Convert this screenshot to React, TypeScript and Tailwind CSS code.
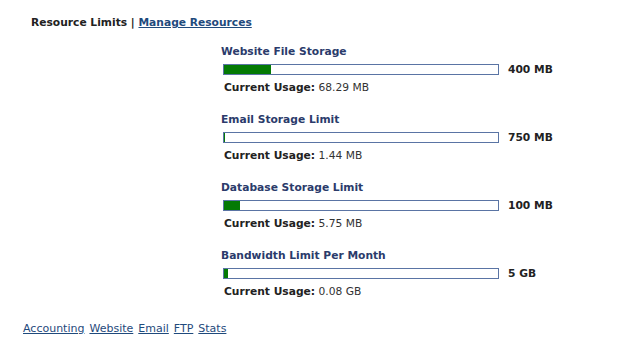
import React from "react";

const items = [
  { title: "Website File Storage", limit: "400 MB", used: 68.29, max: 400, usage: "68.29 MB" },
  { title: "Email Storage Limit", limit: "750 MB", used: 1.44, max: 750, usage: "1.44 MB" },
  { title: "Database Storage Limit", limit: "100 MB", used: 5.75, max: 100, usage: "5.75 MB" },
  { title: "Bandwidth Limit Per Month", limit: "5 GB", used: 0.08, max: 5, usage: "0.08 GB" },
];

export default function App() {
  return (
    <div className="w-[638px] h-[340px] bg-white font-['DejaVu_Sans',sans-serif] text-[10.7px] leading-[13px] text-[#222]">
      <div className="pl-[31px] pt-[16px] font-bold text-[#222]">
        Resource Limits | <a href="#" className="text-[#1f4a7c] underline">Manage Resources</a>
      </div>
      <div className="pl-[221px] pt-[16px] flex flex-col gap-[19px]">
        {items.map((it) => {
          const pct = Math.max((it.used / it.max) * 100, 0.4);
          return (
            <div key={it.title} className="flex flex-col">
              <div className="font-bold text-[#2b3b6b]">{it.title}</div>
              <div className="flex items-center mt-[5px] pl-[2px]">
                <div className="w-[276px] h-[11px] border border-[#5a74a4] bg-white">
                  <div className="h-full bg-[#047a04]" style={{ width: `${pct}%` }} />
                </div>
                <span className="ml-[9px] font-bold text-[#222]">{it.limit}</span>
              </div>
              <div className="mt-[5px] pl-[3px] text-[#333]">
                <span className="font-bold text-[#222]">Current Usage:</span> {it.usage}
              </div>
            </div>
          );
        })}
      </div>
      <div className="pl-[23px] pt-[24px] flex gap-[5px] text-[11px] text-[#1f4a7c]">
        {["Accounting", "Website", "Email", "FTP", "Stats"].map((l) => (
          <a key={l} href="#" className="underline">{l}</a>
        ))}
      </div>
    </div>
  );
}
